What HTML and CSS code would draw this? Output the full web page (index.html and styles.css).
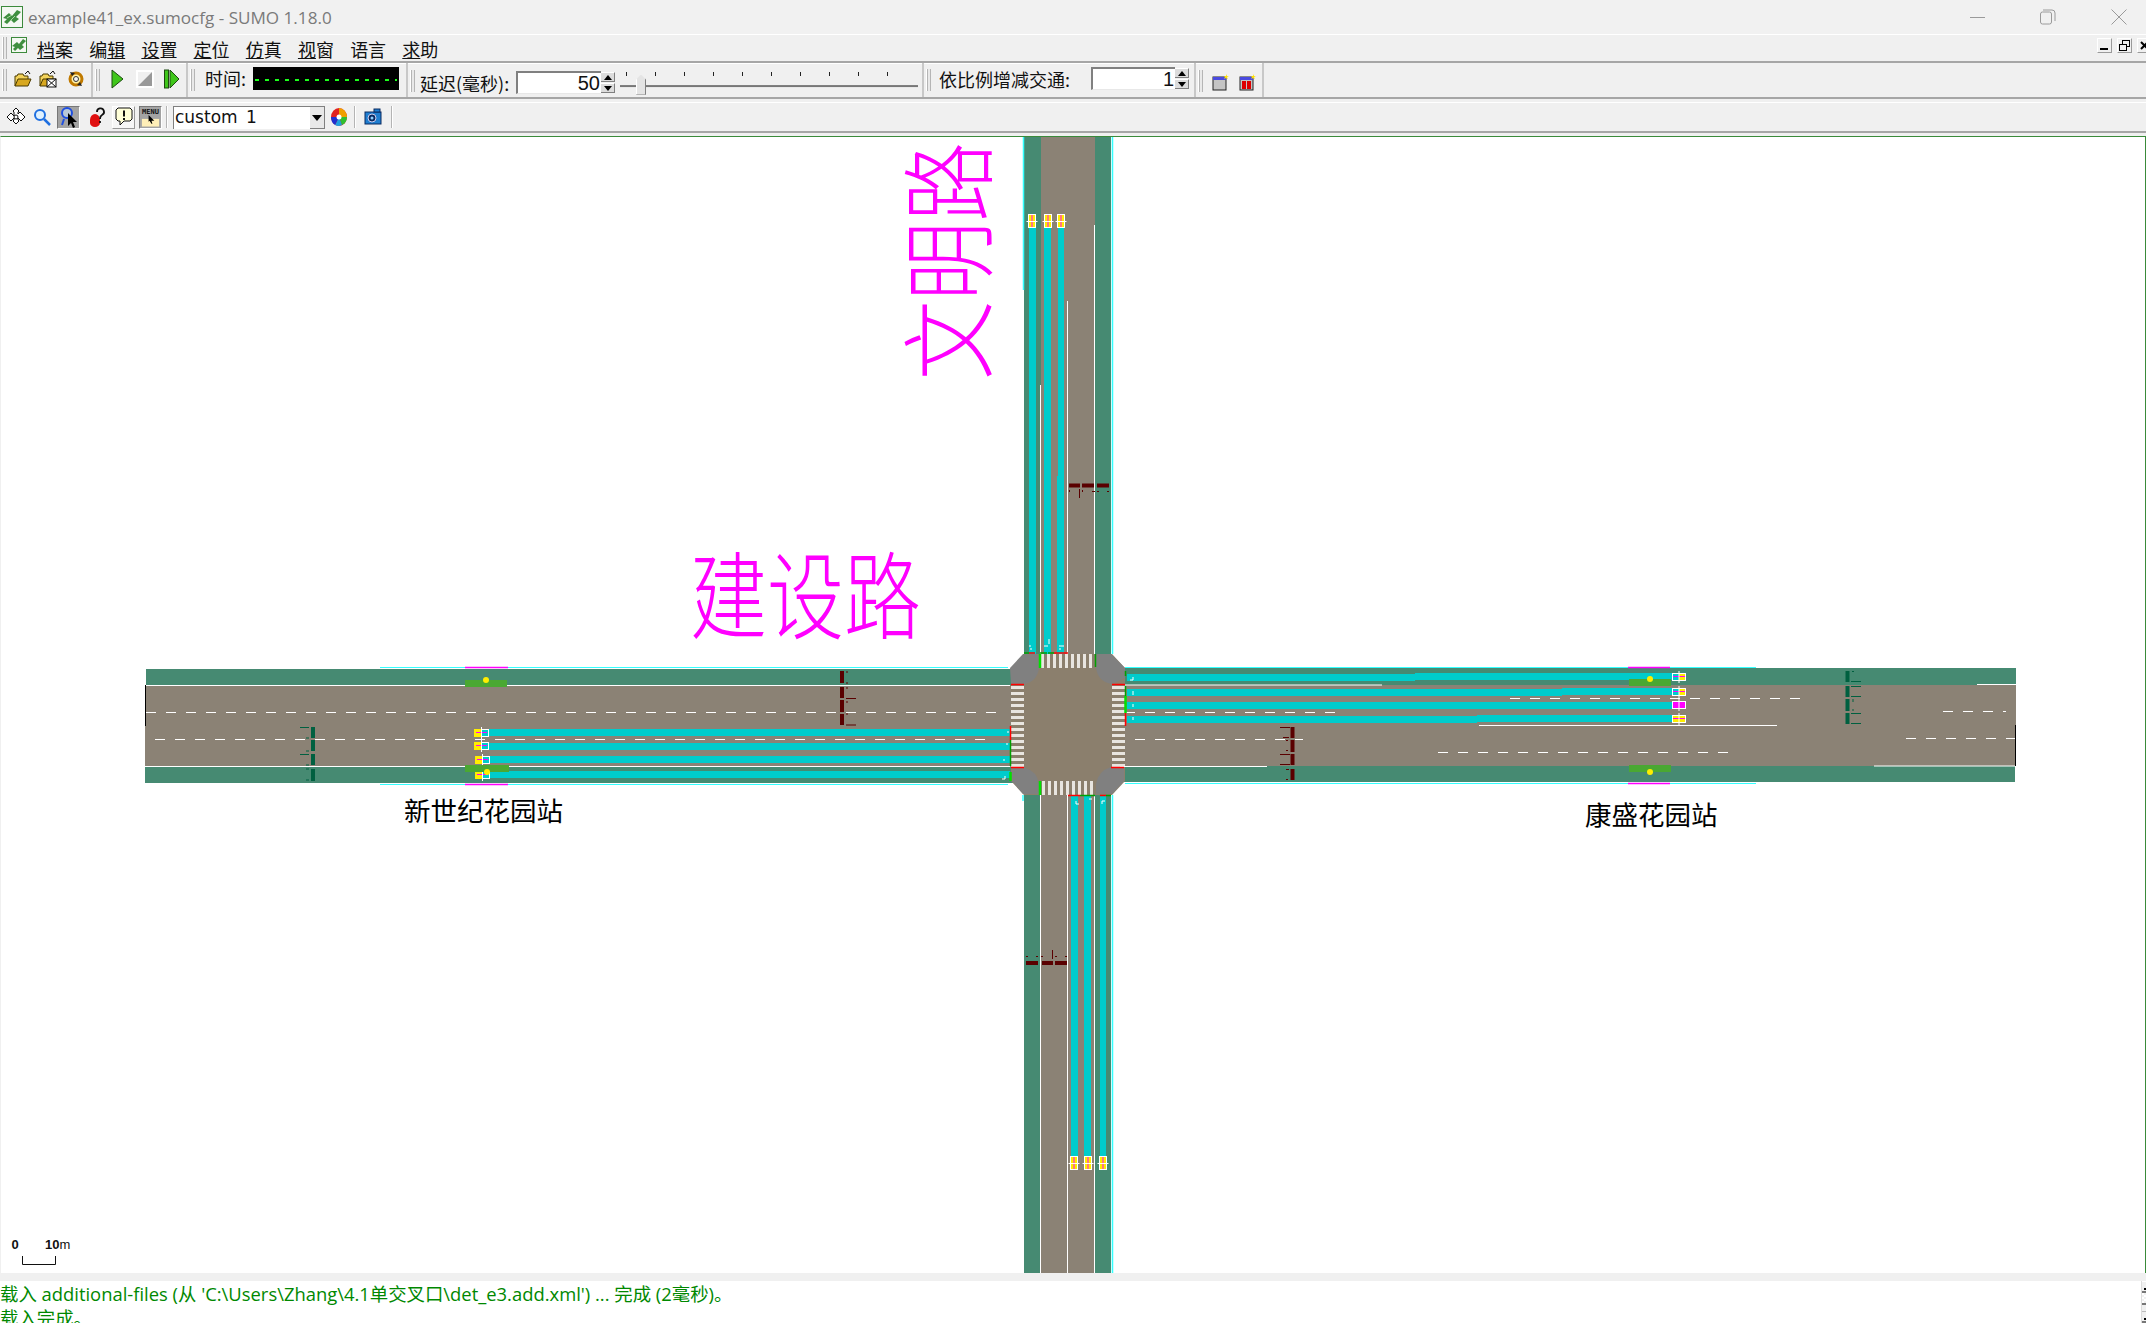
FILE: index.html
```html
<!DOCTYPE html>
<html lang="zh">
<head>
<meta charset="utf-8">
<title>example41_ex.sumocfg - SUMO 1.18.0</title>
<link rel="stylesheet" href="styles.css">
</head>
<body>
<div class="app">
  <header class="titlebar">
    <svg class="app-logo" viewBox="0 0 22 22" width="22" height="22"><rect x="0.5" y="0.5" width="21" height="21" fill="#f4f8f2" stroke="#3c8a3c"/><path d="M2 12 8 7l3 3 5-6 4 2-5 5 3 2-5 4-3-3-4 4-3-2 3-3z" fill="#3f8f3f"/><path d="M6 12l5-3M9 15l5-5" stroke="#a9d8a0" fill="none"/></svg>
    <span class="title-text">example41_ex.sumocfg - SUMO 1.18.0</span>
    <div class="win-controls">
      <svg class="win-min" viewBox="0 0 16 16" width="16" height="16"><path d="M0 8.5h15" stroke="#9a9a9a"/></svg>
      <svg class="win-max" viewBox="0 0 16 16" width="16" height="16"><rect x="0.5" y="3" width="11" height="12" rx="2" fill="none" stroke="#9a9a9a"/><path d="M3 1h9a3 3 0 0 1 3 3v8" fill="none" stroke="#9a9a9a"/></svg>
      <svg class="win-close" viewBox="0 0 16 16" width="16" height="16"><path d="M0.5 0.5l15 15M15.5 0.5l-15 15" stroke="#9a9a9a"/></svg>
    </div>
  </header>

  <nav class="menubar">
    <span class="grip"></span>
    <svg class="menu-logo" viewBox="0 0 16 16" width="16" height="16"><rect x="0.5" y="0.5" width="15" height="15" fill="#f4f8f2" stroke="#3c8a3c"/><path d="M1 9l5-4 2 2 4-5 3 2-4 4 2 2-4 3-2-2-3 3-2-2 2-2z" fill="#3f8f3f"/></svg>
    <span class="menu-item"><span class="acc">档</span>案</span>
    <span class="menu-item">编<span class="acc">辑</span></span>
    <span class="menu-item"><span class="acc">设</span>置</span>
    <span class="menu-item"><span class="acc">定</span>位</span>
    <span class="menu-item"><span class="acc">仿</span>真</span>
    <span class="menu-item"><span class="acc">视</span>窗</span>
    <span class="menu-item">语言</span>
    <span class="menu-item"><span class="acc">求</span>助</span>
    <div class="mdi-buttons">
      <span class="mdi-btn"><svg viewBox="0 0 13 13" width="13" height="13"><path d="M2 10h8" stroke="#000" stroke-width="2"/></svg></span>
      <span class="mdi-btn"><svg viewBox="0 0 13 13" width="13" height="13"><rect x="4.5" y="1.5" width="7" height="6" fill="none" stroke="#000"/><rect x="1.5" y="5.5" width="7" height="6" fill="#f0f0f0" stroke="#000"/><path d="M1 5.5h8M4 1.5h8" stroke="#000"/></svg></span>
      <span class="mdi-btn mdi-cut"><svg viewBox="0 0 13 13" width="13" height="13"><path d="M3 3l7 7M10 3l-7 7" stroke="#000" stroke-width="2"/></svg></span>
    </div>
  </nav>

  <section class="toolbar-row row-one">
    <div class="tb-group g-file">
      <span class="grip"></span>
      <svg class="tb-icon i-open" viewBox="0 0 18 18" width="18" height="18"><path d="M1 16V6h2l1-2h5l1 2h4v3" fill="#f3d35b" stroke="#4a3a00"/><path d="M1 16l3-7h13l-3 7z" fill="#d8a820" stroke="#4a3a00"/><path d="M11 4l3-3 2 3" fill="none" stroke="#111"/></svg>
      <svg class="tb-icon i-net" viewBox="0 0 18 18" width="18" height="18"><path d="M1 16V6h2l1-2h5l1 2h4v3" fill="#f3d35b" stroke="#4a3a00"/><path d="M1 16l3-7h13l-3 7z" fill="#d8a820" stroke="#4a3a00"/><rect x="8" y="9" width="9" height="8" fill="#fff" stroke="#111"/><path d="M8 9l9 8M17 9l-9 8M11 4l3-3 2 3" fill="none" stroke="#111"/></svg>
      <svg class="tb-icon i-reload" viewBox="0 0 18 18" width="18" height="18"><circle cx="9" cy="9" r="6" fill="#fff2a8" stroke="#c07a00" stroke-width="3"/><circle cx="9" cy="9" r="2.5" fill="#f5f5f5" stroke="#333"/><path d="M3 2l2 4 3-3zM15 16l-2-4-3 3z" fill="#222"/></svg>
    </div>
    <div class="tb-group g-run">
      <span class="grip"></span>
      <svg class="tb-icon i-play" viewBox="0 0 14 20" width="14" height="20"><path d="M1 1l11 9-11 9z" fill="#3fc61a" stroke="#1d4a10"/></svg>
      <svg class="tb-icon i-stop" viewBox="0 0 18 18" width="18" height="18"><rect width="18" height="18" fill="#fff"/><path d="M2 16V2h14z" fill="#f0f0f0"/><path d="M16 2v14H2z" fill="#999"/></svg>
      <svg class="tb-icon i-step" viewBox="0 0 16 20" width="16" height="20"><rect x="0.5" y="1" width="4" height="18" fill="#3fc61a" stroke="#1d4a10"/><path d="M6 1l9 9-9 9z" fill="#3fc61a" stroke="#1d4a10"/></svg>
    </div>
    <div class="tb-group g-time">
      <span class="grip"></span>
      <span class="tb-label label-time">时间:</span>
      <div class="lcd"><span class="lcd-dashes"></span></div>
    </div>
    <div class="tb-group g-delay">
      <span class="grip"></span>
      <span class="tb-label label-delay">延迟(毫秒):</span>
      <div class="num-input ni-delay"><span>50</span></div>
      <div class="spin"><span class="spin-up"></span><span class="spin-down"></span></div>
      <div class="slider">
        <div class="slider-ticks"><i></i><i></i><i></i><i></i><i></i><i></i><i></i><i></i><i></i><i></i></div>
        <div class="slider-track"></div>
        <div class="slider-thumb"></div>
      </div>
    </div>
    <div class="tb-group g-scale">
      <span class="grip"></span>
      <span class="tb-label label-scale">依比例增减交通:</span>
      <div class="num-input ni-scale"><span>1</span></div>
      <div class="spin"><span class="spin-up"></span><span class="spin-down"></span></div>
    </div>
    <div class="tb-group g-new">
      <span class="grip"></span>
      <svg class="tb-icon i-new2d" viewBox="0 0 17 17" width="17" height="17"><rect x="1" y="3" width="13" height="13" fill="#c4c4c4" stroke="#222"/><rect x="1" y="3" width="13" height="3" fill="#4a4ae0"/><path d="M14 0l1 2 2 0-2 1 1 2-2-1-2 1 1-2-1-1h2z" fill="#ffe000"/></svg>
      <svg class="tb-icon i-new3d" viewBox="0 0 17 17" width="17" height="17"><rect x="1" y="3" width="13" height="13" fill="#c4c4c4" stroke="#222"/><rect x="1" y="3" width="13" height="3" fill="#4a4ae0"/><rect x="3" y="7" width="4" height="8" fill="#d00"/><rect x="8" y="7" width="4" height="8" fill="#d00"/><path d="M14 0l1 2 2 0-2 1 1 2-2-1-2 1 1-2-1-1h2z" fill="#ffe000"/></svg>
    </div>
  </section>
  <div class="row-rule"></div>

  <section class="toolbar-row row-two">
    <svg class="tb2-icon i-move" viewBox="0 0 18 18" width="18" height="18"><path d="M9 0l3 3-1 1v2l2-2 1 1 4 4-4 4-1-1-2-2v2l1 1-3 3-3-3 1-1v-2l-2 2-1 1-4-4 4-4 1 1 2 2V4L6 3z" fill="#fff" stroke="#111"/><circle cx="9" cy="9" r="2" fill="none" stroke="#111"/></svg>
    <svg class="tb2-icon i-zoom" viewBox="0 0 18 18" width="18" height="18"><circle cx="7" cy="7" r="5" fill="#dff1ff" stroke="#1f6fe0" stroke-width="2"/><path d="M11 11l6 6" stroke="#1f6fe0" stroke-width="2.5"/></svg>
    <span class="tb2-btn pressed"><svg viewBox="0 0 20 22" width="20" height="22"><circle cx="8" cy="7" r="5" fill="#b8c8d8" stroke="#1f4fe0" stroke-width="2"/><path d="M5 13L3 19" stroke="#1f4fe0" stroke-width="2"/><path d="M9 7l9 9-4 0 2 5-2 1-2-5-3 3z" fill="#000"/></svg></span>
    <svg class="tb2-icon i-help" viewBox="0 0 18 22" width="18" height="22"><path d="M2 14a5 6 0 0 1 10 0v3a5 4 0 0 1-10 0z" fill="#e01010"/><path d="M9 6a3.500 3.500 0 1 1 5 3c-2 1-2 2-2 4M12 15v2" fill="none" stroke="#111" stroke-width="1.800"/></svg>
    <span class="tb2-btn bubble"><svg viewBox="0 0 18 20" width="18" height="20"><path d="M3 1h12l2 2v9l-2 2H9l-4 4v-4H3l-2-2V3z" fill="#ffffd8" stroke="#111"/><path d="M9 3.500v6M9 11v2" stroke="#111" stroke-width="2"/></svg></span>
    <span class="tb2-btn pressed"><svg viewBox="0 0 22 22" width="22" height="22"><rect x="2" y="13" width="18" height="8" fill="#ffefb8"/><path d="M9 9l6 6-3 0 1 3-1 0-2-3-1 1z" fill="#000"/></svg><span class="menu-glyph">MENU</span></span>
    <span class="tb2-sep"></span>
    <div class="combo"><span class="combo-text">custom 1</span><span class="combo-arrow"></span></div>
    <svg class="tb2-icon i-wheel" viewBox="0 0 18 20" width="18" height="20"><ellipse cx="9" cy="10" rx="8" ry="9" fill="#e02020"/><path d="M9 10V1a8 9 0 0 1 8 9z" fill="#f0a000"/><path d="M9 10h8a8 9 0 0 1-5 8z" fill="#30c030"/><path d="M9 10l3 8a8 9 0 0 1-7 0z" fill="#20a0e0"/><path d="M9 10l-4 8a8 9 0 0 1-4-8z" fill="#2030d0"/><circle cx="9" cy="10" r="2.500" fill="#fff"/></svg>
    <span class="tb2-sep sep-a"></span>
    <svg class="tb2-icon i-camera" viewBox="0 0 18 18" width="18" height="18"><rect x="1" y="4" width="16" height="12" fill="#1f7ed0" stroke="#0a2a60"/><rect x="10" y="1" width="6" height="3" fill="#1f7ed0" stroke="#0a2a60"/><circle cx="8" cy="10" r="4" fill="#0a2a60" stroke="#cce"/><circle cx="8" cy="10" r="1.500" fill="#8fd0ff"/></svg>
    <span class="tb2-sep sep-b"></span>
  </section>
  <div class="row-rule-two"></div>

  <main class="canvas">
    <svg class="net" viewBox="1 136 2144 1136" width="2144" height="1136">
      <defs>
        <g id="detW"><rect width="7.500" height="8" class="yellow"/><rect x="7.500" width="7.500" height="8" class="lane"/><path d="M2 3.500h11" class="magenta-line"/><rect x="7.500" y="0.500" width="7" height="7" class="outline"/><path d="M7.500-2v12" class="white-line"/></g>
        <g id="detE"><rect width="7" height="8" class="lane"/><rect x="7" width="7" height="8" class="yellow"/><path d="M1 3.500h12" class="magenta-line"/><rect x="0.500" y="0.500" width="13" height="7" class="outline"/><path d="M7-2v12" class="white-line"/></g>
        <g id="detM"><rect width="14" height="8" class="magenta-fill"/><rect x="0.500" y="0.500" width="13" height="7" class="outline"/><path d="M7-2v12" class="white-line"/></g>
        <g id="detY"><rect width="14" height="8" class="yellow"/><path d="M1 3.500h12" class="magenta-line"/><rect x="0.500" y="0.500" width="13" height="7" class="outline"/><path d="M7-2v12" class="white-line"/></g>
        <g id="detN"><rect width="8" height="14" class="yellow"/><path d="M4 1v12" class="magenta-line"/><rect x="0.500" y="0.500" width="7" height="13" class="outline"/><path d="M-1.500 7.500h11" class="white-line"/></g>
      </defs>

      <!-- roads -->
      <rect x="146" y="668" width="870" height="16" class="verge"/>
      <rect x="145" y="766" width="870" height="16" class="verge"/>
      <rect x="145" y="684" width="870" height="82" class="asphalt"/>
      <rect x="1120" y="667" width="896" height="17" class="verge"/>
      <rect x="1120" y="765" width="895" height="16" class="verge"/>
      <rect x="1120" y="684" width="896" height="81" class="asphalt"/>
      <rect x="1024" y="136" width="17" height="520" class="verge"/>
      <rect x="1095" y="136" width="16" height="520" class="verge"/>
      <rect x="1041" y="136" width="54" height="520" class="asphalt"/>
      <rect x="1024" y="790" width="17" height="482" class="verge"/>
      <rect x="1095" y="790" width="16" height="482" class="verge"/>
      <rect x="1041" y="790" width="54" height="482" class="asphalt"/>

      <!-- junction -->
      <path d="M1024 653H1112L1125 667V780L1112 794H1024L1011 780V667z" class="junction"/>
      <path d="M1023 653H1039V667Q1037 681 1024 683H1011L1010 667z" class="corner"/>
      <path d="M1096 653H1111L1125 667V677L1112 683Q1098 681 1096 667z" class="corner"/>
      <path d="M1012 767H1025Q1037 770 1039 783V793H1023L1012 780z" class="corner"/>
      <path d="M1124 766H1111Q1098 770 1096 783V793H1112L1124 780z" class="corner"/>
      <path d="M1041 660H1095" class="zebra-h"/>
      <path d="M1042 787H1095" class="zebra-h"/>
      <path d="M1017.500 685V766" class="zebra-v"/>
      <path d="M1118.500 685V766" class="zebra-v"/>

      <!-- edge lines -->
      <path d="M380 666.500H1008M380 783.500H1008M1125 666.500H1756M1125 782.500H1756" class="edge-cyan"/>
      <path d="M1023.500 136V289M1112.500 136V653M1112.500 794V1272M1023 794V800" class="edge-cyan wide"/>
      <path d="M465 666.500H508M465 783.500H508M1628 666.500H1670M1628 782.500H1670" class="magenta-line wide"/>

      <!-- reserved lanes -->
      <rect x="489" y="728" width="521" height="7" class="lane"/>
      <rect x="489" y="742" width="521" height="7" class="lane"/>
      <rect x="489" y="755" width="521" height="7" class="lane"/>
      <rect x="489" y="770" width="521" height="7" class="lane"/>
      <rect x="1127" y="673" width="288" height="7" class="lane"/>
      <rect x="1415" y="672" width="257" height="7" class="lane"/>
      <rect x="1127" y="688" width="435" height="7" class="lane"/>
      <rect x="1562" y="687" width="110" height="7" class="lane"/>
      <rect x="1127" y="701" width="545" height="7" class="lane"/>
      <rect x="1127" y="715" width="350" height="7" class="lane"/>
      <rect x="1477" y="714" width="195" height="7" class="lane"/>
      <rect x="1029" y="227" width="7" height="426" class="lane"/>
      <rect x="1044" y="227" width="7" height="426" class="lane"/>
      <rect x="1058" y="227" width="6" height="426" class="lane"/>
      <rect x="1057" y="475" width="7" height="178" class="lane"/>
      <rect x="1071" y="794" width="7" height="361" class="lane"/>
      <rect x="1084" y="794" width="7" height="361" class="lane"/>
      <rect x="1100" y="794" width="6" height="361" class="lane"/>

      <!-- markings -->
      <path d="M145 684.500H1010M145 765.500H1010M1125 684H1382M1479 724.500H1777M1120 765.500H1267M1874 765H2015M1977 683.500H2016M1040.500 384V653M1067.500 300V653M1094.500 224V653M1040.500 794V1272M1067.500 794V1272M1094.500 794V1272" class="white-line"/>
      <path d="M146 711.500H1002M155 738.500H994M1510 697.500H1804M1125 711.500H1339M1135 738.500H1303M1438 751.500H1732M1943 710.500H2006M1906 737.500H2016" class="dash"/>
      <path d="M145.500 684V725M2015.500 724V765" class="black-line"/>

      <!-- detectors -->
      <use href="#detW" x="474" y="728"/><use href="#detW" x="474" y="741"/><use href="#detW" x="475" y="755"/><use href="#detW" x="475" y="770"/>
      <use href="#detE" x="1672" y="672"/><use href="#detE" x="1672" y="687"/><use href="#detM" x="1672" y="700"/><use href="#detY" x="1672" y="714"/>
      <use href="#detN" x="1028" y="213"/><use href="#detN" x="1044" y="213"/><use href="#detN" x="1057" y="213"/>
      <use href="#detN" x="1070" y="1155"/><use href="#detN" x="1084" y="1155"/><use href="#detN" x="1099" y="1155"/>

      <!-- bus stops -->
      <rect x="465" y="679" width="42" height="7" class="stop"/>
      <rect x="465" y="764" width="44" height="7" class="stop"/>
      <rect x="1629" y="678" width="42" height="7" class="stop"/>
      <rect x="1629" y="764" width="42" height="7" class="stop"/>
      <circle cx="486" cy="679" r="3" class="dot"/><circle cx="487" cy="771" r="3" class="dot"/>
      <circle cx="1650" cy="678" r="3" class="dot"/><circle cx="1650" cy="771" r="3" class="dot"/>

      <!-- induction loops -->
      <path d="M842 670v12M842 686v11M842 699v12M842 713v11" class="loop-red"/>
      <path d="M846 671h2M846 682h2M846 687h2M846 697.500h10M846 701h2M846 713h2M846 724h10" class="tick-red"/>
      <path d="M1292.500 726v11M1292.500 739v12M1292.500 753v11M1292.500 768v11" class="loop-red"/>
      <path d="M1280 726.500h10M1283 736.500h6M1286 739.500h2M1286 749.500h2M1280 753.500h10M1280 763.500h10M1286 768.500h3M1286 778.500h2" class="tick-red"/>
      <path d="M1069 484.500h11M1082 484.500h12M1097 484.500h12" class="loop-red"/>
      <path d="M1079.500 488v9M1069.500 489v2M1082.500 489v2M1092 490.500h3M1097 490.500h2M1107 490.500h2" class="tick-red"/>
      <path d="M1026 962h12M1042 962h11M1055 962h12" class="loop-red"/>
      <path d="M1052.500 949v9M1026 955.500h2M1036 955.500h2M1041 955.500h2M1055 955.500h2M1065 955.500h2" class="tick-red"/>
      <path d="M313 726v11M313 739v11M313 753v11M313 768v12" class="loop-green"/>
      <path d="M300 726.500h9M306 737h3M306 750h3M300 753.500h9M306 764h3M306 768h3M306 779h3" class="tick-green"/>
      <path d="M1847.500 670v11M1847.500 685v11M1847.500 698v12M1847.500 712v11" class="loop-green"/>
      <path d="M1852 670.500h2M1851 680.500h10M1851 685.500h10M1851 695.500h10M1853 698v3M1853 708v2M1851 712.500h10M1851 722.500h10" class="tick-green"/>

      <!-- signal stop lines -->
      <path d="M1029 652h6M1054 652h14M1068 794.500h12M1100 794.500h6M1011 683.500h13M1011 766.500h13M1112 683.500h13M1111 766.500h13M1010.500 725v14M1125.500 712v13" class="sig-red"/>
      <path d="M1024 652h5M1040 652h7M1048 652h6M1080 794.500h15M1106 794.500h5M1095.500 653v13M1010.500 739v26M1125.500 670v5M1125.500 685v10" class="sig-green"/>
      <path d="M1040 653v14M1040 780v14M1010.500 771v9M1125.500 695v17" class="sig-lime"/>

      <!-- turn arrows -->
      <path d="M1029 645h2M1031 647v2M1044 645h4M1049 638v5M1059 645h5M1059 648h2M1076 800v3h3M1089 798h3M1102 800h3M1102 803v-3M1008 730v2M1006 743h2M1003 759h2M1005 775v3h-3M1133 676v3h-3M1133 690v4M1133 703v3M1133 716v3" class="white-line"/>

      <!-- labels -->
      <text transform="translate(690 630.500) scale(1 1.240)" class="label-road">建设路</text>
      <text transform="translate(985 379) rotate(-90) scale(1.030 1.240)" class="label-road">文明路</text>
      <text x="404" y="820" class="label-stop">新世纪花园站</text>
      <text x="1585" y="824" class="label-stop">康盛花园站</text>

      <!-- scale bar -->
      <text x="15" y="1248" class="scale-text">0</text>
      <text x="45" y="1248" class="scale-text scale-left">10<tspan class="scale-unit">m</tspan></text>
      <path d="M22.500 1255v8.500H55.500v-8.500" class="scale-bar"/>
    </svg>
  </main>

  <div class="split"></div>
  <footer class="messages">
    <div class="msg-body">
      <div class="msg">载入 additional-files (从 'C:\Users\Zhang\4.1单交叉口\det_e3.add.xml') ... 完成 (2毫秒)。</div>
      <div class="msg">载入完成。</div>
    </div>
    <div class="vscroll">
      <span class="vs-btn"></span>
      <span class="vs-track"></span>
      <span class="vs-btn short"></span>
      <span class="vs-btn"></span>
    </div>
  </footer>
</div>
</body>
</html>
```
FILE: styles.css
```css
* { box-sizing: border-box; }
html, body { margin: 0; padding: 0; height: 100%; overflow: hidden; background: #f0f0f0; }
body { font-family: "Noto Sans CJK SC", "Noto Sans", sans-serif; color: #111; }
.app { width: 2146px; height: 1323px; display: flex; flex-direction: column; overflow: hidden; }

.titlebar { height: 35px; display: flex; align-items: center; background: #f1f1f1; border-bottom: 1px solid #fff; }
.app-logo { margin-left: 1px; margin-top: -1px; flex: none; }
.title-text { margin-left: 5px; font-family: "Open Sans", sans-serif; font-size: 17.100px; color: #7a7a7a; white-space: nowrap; }
.win-controls { margin-left: auto; display: flex; align-items: center; gap: 55px; padding-right: 19px; margin-top: -1px; }
.win-min { margin-right: -1px; }

.menubar { height: 28px; display: flex; align-items: center; background: #f0f0f0; border-bottom: 2px solid #a6a6a6; position: relative; }
.grip { flex: none; width: 5px; height: 22px; margin-left: 2px; border-left: 1px solid #fff; border-right: 1px solid #b5b5b5; background: #e9e9e9; box-shadow: inset 1px 0 #b5b5b5; }
.menu-logo { margin-left: 4px; margin-top: -6px; flex: none; }
.menu-item { font-size: 18px; line-height: 24px; width: 52.200px; white-space: nowrap; color: #111; margin-top: 2px; }
.menu-logo + .menu-item { margin-left: 10px; }
.acc { text-decoration: underline; text-underline-offset: 1px; }
.mdi-buttons { margin-left: auto; display: flex; gap: 5px; margin-top: -6px; align-self: center; width: 49px; overflow: hidden; }
.mdi-btn { flex: none; width: 15px; height: 15px; display: flex; align-items: center; justify-content: center; background: #f0f0f0; border-top: 1px solid #fff; border-left: 1px solid #fff; border-right: 1px solid #9a9a9a; border-bottom: 1px solid #9a9a9a; }

.toolbar-row { display: flex; }
.row-one { height: 34px; align-items: stretch; }
.tb-group { flex: none; display: flex; align-items: center; border-right: 2px solid #c8c8c8; position: relative; box-shadow: inset 0 1px #fff; }
.g-file { width: 93px; }
.g-run { width: 95px; }
.g-time { width: 220px; }
.g-delay { width: 516px; padding-top: 5px; }
.g-scale { width: 272px; padding-top: 3px; }
.g-new { width: 68px; padding-top: 5px; }
.tb-icon { flex: none; }
.i-open { margin-left: 7px; }
.i-net { margin-left: 7px; }
.i-reload { margin-left: 10px; }
.g-file .tb-icon, .g-run .tb-icon { margin-top: -3px; }
.i-play { margin-left: 11px; }
.i-stop { margin-left: 11px; }
.i-step { margin-left: 10px; }
.tb-label { font-size: 18px; line-height: 24px; white-space: nowrap; color: #111; }
.label-time { margin-left: 10px; width: 48px; margin-top: -5px; }
.lcd { width: 146px; height: 23px; background: #000; margin-top: -3px; position: relative; }
.lcd-dashes { position: absolute; left: 2px; right: 2px; top: 12px; height: 2px; background: repeating-linear-gradient(90deg, #1cff1c 0 4px, transparent 4px 10px); }
.label-delay { margin-left: 5px; width: 96px; }
.num-input { background: #fff; border-top: 2px solid #808080; border-left: 2px solid #808080; border-bottom: 1px solid #e8e8e8; display: flex; align-items: center; justify-content: flex-end; font-family: "Liberation Sans", sans-serif; font-size: 20px; color: #111; padding-right: 1px; flex: none; }
.ni-delay { width: 85px; height: 23px; }
.ni-scale { width: 84px; height: 23px; margin-top: -6px; margin-left: 10px; }
.spin { flex: none; width: 14px; display: flex; flex-direction: column; gap: 1px; }
.g-scale .spin { margin-top: -6px; }
.spin span { height: 10px; background: #dcdcdc; border-top: 1px solid #fff; border-right: 1px solid #808080; border-bottom: 1px solid #808080; position: relative; display: block; }
.spin-up::after, .spin-down::after { content: ""; position: absolute; left: 3px; top: 2px; border-left: 4px solid transparent; border-right: 4px solid transparent; }
.spin-up::after { border-bottom: 5px solid #000; }
.spin-down::after { border-top: 5px solid #000; }
.slider { flex: none; width: 299px; height: 26px; margin-left: 5px; position: relative; background: #f0f0f0; }
.slider-ticks { position: absolute; left: 6px; top: 2px; display: flex; gap: 28px; }
.slider-ticks i { display: block; width: 1px; height: 4px; background: #222; }
.slider-track { position: absolute; left: 0; right: 1px; top: 15px; height: 3px; background: linear-gradient(#808080 0 1px, #777 1px 2px, #e8e8e8 2px); }
.slider-thumb { position: absolute; left: 16px; top: 5px; width: 10px; height: 20px; background: #e4e4e4; border-right: 1px solid #808080; border-bottom: 1px solid #808080; border-left: 1px solid #fff; clip-path: polygon(0 25%, 50% 0, 100% 25%, 100% 100%, 0 100%); }
.label-scale { margin-left: 8px; width: 142px; margin-top: -6px; }
.i-new2d { margin-left: 9px; }
.i-new3d { margin-left: 10px; }
.g-new .grip { margin-top: -3px; }
.g-delay .grip { margin-top: -3px; }
.g-scale .grip { margin-top: -3px; }

.row-rule { height: 6px; background: #f0f0f0; border-top: 2px solid #a6a6a6; border-bottom: 1px solid #fff; }
.row-two { height: 28px; align-items: center; background: #f0f0f0; }
.tb2-icon { flex: none; }
.tb2-btn { flex: none; position: relative; width: 23px; height: 23px; display: flex; align-items: center; justify-content: center; }
.pressed { background: #a3a3a3; border-top: 1px solid #777; border-left: 1px solid #777; border-right: 1px solid #fff; border-bottom: 1px solid #fff; }
.bubble { background: #f6f6f6; border-top: 1px solid #fff; border-left: 1px solid #fff; border-right: 1px solid #999; border-bottom: 1px solid #999; }
.menu-glyph { position: absolute; left: 2px; top: 1px; font-family: "DejaVu Sans Mono", monospace; font-size: 7px; line-height: 8px; font-weight: 700; color: #111; letter-spacing: 0; }
.i-move { margin-left: 7px; }
.i-zoom { margin-left: 8px; }
.row-two .pressed:nth-of-type(1) { margin-left: 6px; }
.i-help { margin-left: 8px; }
.bubble { margin-left: 6px; }
.bubble + .pressed { margin-left: 4px; }
.tb2-sep { flex: none; width: 2px; height: 22px; margin-left: 4px; background: #b4b4b4; border-right: 1px solid #fff; }
.combo { flex: none; width: 152px; height: 23px; margin-left: 5px; display: flex; background: #fff; border-top: 1px solid #808080; border-left: 1px solid #808080; }
.combo-text { flex: 1; font-family: "DejaVu Sans", sans-serif; font-size: 17px; line-height: 21px; padding-left: 1px; color: #111; white-space: pre; word-spacing: 3px; }
.combo-arrow { flex: none; width: 15px; background: #e8e8e8; border-right: 1px solid #808080; border-bottom: 1px solid #808080; position: relative; }
.combo-arrow::after { content: ""; position: absolute; left: 2px; top: 8px; border-left: 5px solid transparent; border-right: 5px solid transparent; border-top: 6px solid #000; }
.i-wheel { margin-left: 5px; }
.sep-a { margin-left: 6px; }
.i-camera { margin-left: 8px; }
.sep-b { margin-left: 9px; }
.row-rule-two { height: 5px; background: #f0f0f0; border-top: 2px solid #a6a6a6; }

.canvas { height: 1137px; background: #fff; border-top: 1px solid #3a8a3a; border-right: 1px solid #3a8a3a; border-left: 1px solid #f0f0f0; overflow: hidden; flex: none; }
.net { display: block; background: #fff; }
.split { height: 8px; background: #f0f0f0; flex: none; }
.messages { flex: 1; background: #fff; overflow: hidden; display: flex; min-height: 0; }
.msg-body { flex: 1; padding-top: 1px; overflow: hidden; }
.msg { font-size: 18.400px; line-height: 24px; color: #008800; white-space: nowrap; font-family: "Open Sans", "Noto Sans CJK SC", sans-serif; }
.vscroll { flex: none; width: 5px; display: flex; flex-direction: column; border-left: 1px solid #dcdcdc; padding-top: 1px; }
.vs-btn { display: block; height: 13px; background: #f0f0f0; border-bottom: 2px solid #777; position: relative; }
.vs-btn.short { height: 8px; border-bottom: 1px solid #bbb; }
.vs-btn::after { content: ""; position: absolute; left: 2px; top: 6px; width: 2px; height: 2px; background: #000; }
.vs-btn.short::after { display: none; }
.vs-track { display: block; height: 14px; background: repeating-conic-gradient(#f0f0f0 0 25%, #fff 0 50%) 0 0 / 4px 4px; border-bottom: 2px solid #777; }

.verge { fill: #468a72; }
.asphalt { fill: #8b8275; }
.junction { fill: #8b7f6d; }
.corner { fill: #808080; }
.lane { fill: #00cccc; }
.yellow { fill: #ffee00; }
.magenta-fill { fill: #ff00ff; }
.outline { fill: none; stroke: #fff; stroke-width: 1; }
.white-line { fill: none; stroke: #fff; stroke-width: 1; }
.magenta-line { fill: none; stroke: #ff00ff; stroke-width: 1; }
.magenta-line.wide { stroke-width: 1.500; }
.edge-cyan { fill: none; stroke: #33ffff; stroke-width: 1; }
.edge-cyan.wide { stroke-width: 1.500; }
.dash { fill: none; stroke: #fff; stroke-width: 1; stroke-dasharray: 10 10; }
.black-line { fill: none; stroke: #000; stroke-width: 1; }
.zebra-h { fill: none; stroke: #e8e5e0; stroke-width: 14; stroke-dasharray: 3 3; }
.zebra-v { fill: none; stroke: #e8e5e0; stroke-width: 13; stroke-dasharray: 3 3; }
.stop { fill: #4aa832; }
.dot { fill: #ffee00; }
.loop-red { fill: none; stroke: #5a0000; stroke-width: 4; }
.tick-red { fill: none; stroke: #5a0000; stroke-width: 1; }
.loop-green { fill: none; stroke: #006040; stroke-width: 4; }
.tick-green { fill: none; stroke: #006040; stroke-width: 1; }
.sig-red { fill: none; stroke: #ff0000; stroke-width: 1.500; }
.sig-green { fill: none; stroke: #00a000; stroke-width: 1.500; }
.sig-lime { fill: none; stroke: #00e000; stroke-width: 2.500; }
.label-road { font-family: "Noto Sans CJK SC", sans-serif; font-size: 77px; font-weight: 300; fill: #ff00ff; }
.label-stop { font-family: "Noto Sans CJK SC", sans-serif; font-size: 26.500px; font-weight: 400; fill: #000; }
.scale-text { font-family: "Liberation Sans", sans-serif; font-size: 13px; font-weight: 700; fill: #111; text-anchor: middle; }
.scale-left { text-anchor: start; }
.scale-unit { font-weight: 400; }
.scale-bar { fill: none; stroke: #111; stroke-width: 1; }
```
